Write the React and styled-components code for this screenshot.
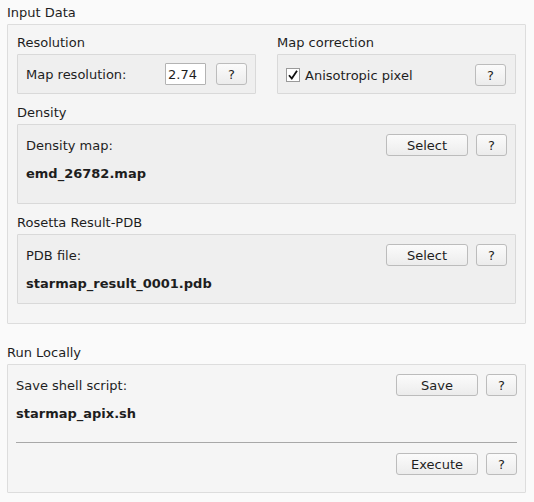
import React from "react";
import styled, { createGlobalStyle } from "styled-components";

const Global = createGlobalStyle`
  html, body { margin: 0; padding: 0; background: #fafafa; }
  body {
    font-family: "DejaVu Sans", "Liberation Sans", sans-serif;
    font-size: 13px;
    color: #1e1e1e;
  }
  * { box-sizing: border-box; }
`;

const Page = styled.div`
  width: 534px;
  height: 502px;
  padding: 5px 8px 0 7px;
  display: flex;
  flex-direction: column;
  gap: 21px;
`;

const GroupWrap = styled.div`
  display: flex;
  flex-direction: column;
  min-width: 0;
`;

const Title = styled.div`
  height: 15px;
  line-height: 15px;
  margin-bottom: 4px;
  white-space: nowrap;
`;

const Frame = styled.div`
  background: ${(p) => (p.$outer ? "#f5f5f5" : "#efefef")};
  border: 1px solid ${(p) => (p.$outer ? "#dddddd" : "#d9d9d9")};
  border-radius: 1px;
  padding: ${(p) => p.$pad};
  min-height: ${(p) => p.$minH || "auto"};
  display: flex;
  flex-direction: column;
  gap: ${(p) => p.$gap || "0px"};
`;

const TwoCol = styled.div`
  display: grid;
  grid-template-columns: 239px 239px;
  column-gap: 21px;
`;

const Row = styled.div`
  display: flex;
  align-items: center;
  height: 22px;
  gap: ${(p) => p.$gap || "8px"};
`;

const Label = styled.span`
  flex: 1;
  white-space: nowrap;
`;

const FileName = styled.div`
  font-weight: bold;
  height: 15px;
  line-height: 15px;
  margin-top: 10px;
  white-space: nowrap;
`;

const NumInput = styled.input`
  width: 41px;
  height: 22px;
  border: 1px solid #b3b3b3;
  border-radius: 1px;
  background: #ffffff;
  font-family: inherit;
  font-size: 13px;
  color: #1e1e1e;
  padding: 0 2px;
  outline: none;
`;

const Button = styled.button`
  width: ${(p) => (p.$wide ? "82px" : "31px")};
  height: 22px;
  padding: 0;
  border: 1px solid #bcbcbc;
  border-radius: 3px;
  background: linear-gradient(#fbfbfb, #ececec);
  font-family: inherit;
  font-size: 13px;
  color: #1e1e1e;
  flex: none;
`;

const CheckBox = styled.span`
  width: 14px;
  height: 14px;
  border: 1px solid #9a9a9a;
  background: #ffffff;
  display: inline-flex;
  align-items: center;
  justify-content: center;
  flex: none;
`;

const CheckLabel = styled.span`
  flex: 1;
  margin-left: -3px;
  white-space: nowrap;
`;

const Separator = styled.div`
  height: 1px;
  background: #a8a8a8;
  margin: 21px 0 10px;
`;

const ButtonRow = styled(Row)`
  justify-content: flex-end;
`;

function Group({ title, children }) {
  return (
    <GroupWrap>
      <Title>{title}</Title>
      {children}
    </GroupWrap>
  );
}

function FileBox({ label, file, minH }) {
  return (
    <Frame $pad="9px 8px 11px 8px" $minH={minH}>
      <Row>
        <Label>{label}</Label>
        <Button $wide>Select</Button>
        <Button>?</Button>
      </Row>
      <FileName>{file}</FileName>
    </Frame>
  );
}

export default function App() {
  return (
    <>
      <Global />
      <Page>
        <Group title="Input Data">
          <Frame $outer $pad="10px 9px 19px 9px" $gap="11px">
            <TwoCol>
              <Group title="Resolution">
                <Frame $pad="8px 8px 8px 8px">
                  <Row $gap="10px">
                    <Label>Map resolution:</Label>
                    <NumInput defaultValue="2.74" />
                    <Button>?</Button>
                  </Row>
                </Frame>
              </Group>
              <Group title="Map correction">
                <Frame $pad="9px 9px 7px 8px">
                  <Row>
                    <CheckBox>
                      <svg width="12" height="12" viewBox="0 0 12 12">
                        <path d="M2 6.2 L4.8 9.6 L10 1.8" fill="none" stroke="#111" strokeWidth="1.8" />
                      </svg>
                    </CheckBox>
                    <CheckLabel>Anisotropic pixel</CheckLabel>
                    <Button>?</Button>
                  </Row>
                </Frame>
              </Group>
            </TwoCol>
            <Group title="Density">
              <FileBox label="Density map:" file="emd_26782.map" minH="80px" />
            </Group>
            <Group title="Rosetta Result-PDB">
              <FileBox label="PDB file:" file="starmap_result_0001.pdb" minH="70px" />
            </Group>
          </Frame>
        </Group>
        <Group title="Run Locally">
          <Frame $outer $pad="9px 8px 17px 8px">
            <Row>
              <Label>Save shell script:</Label>
              <Button $wide>Save</Button>
              <Button>?</Button>
            </Row>
            <FileName>starmap_apix.sh</FileName>
            <Separator />
            <ButtonRow>
              <Button $wide>Execute</Button>
              <Button>?</Button>
            </ButtonRow>
          </Frame>
        </Group>
      </Page>
    </>
  );
}
